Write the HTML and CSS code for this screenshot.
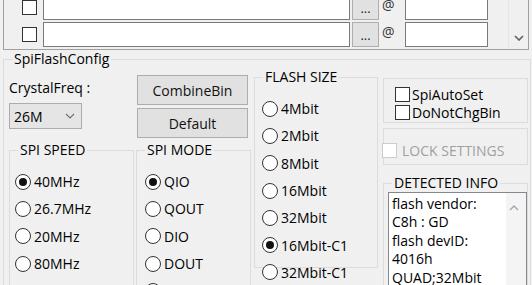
FILE: index.html
```html
<!DOCTYPE html>
<html>
<head>
<meta charset="utf-8">
<link rel="stylesheet" href="styles.css">
</head>
<body>
<div class="files">
  <div class="file-list">
    <div class="file-row">
      <span class="chk-box"></span>
      <span class="path"></span>
      <span class="browse">...</span>
      <span class="at">@</span>
      <span class="addr"></span>
    </div>
    <div class="file-row">
      <span class="chk-box"></span>
      <span class="path"></span>
      <span class="browse">...</span>
      <span class="at">@</span>
      <span class="addr"></span>
    </div>
  </div>
  <div class="vscroll">
    <svg class="chev-down" width="10" height="6" viewBox="0 0 10 6"><polyline points="1,1 5,5 9,1" fill="none" stroke="#606060" stroke-width="1.6"/></svg>
  </div>
</div>

<fieldset class="config">
  <legend>SpiFlashConfig</legend>
  <div class="cols">
    <div class="col col1">
      <div class="label">CrystalFreq :</div>
      <div class="combo"><span>26M</span>
        <svg width="10" height="6" viewBox="0 0 10 6"><polyline points="1,1 5,5 9,1" fill="none" stroke="#707070" stroke-width="1.1"/></svg>
      </div>
      <fieldset class="group speed">
        <legend>SPI SPEED</legend>
        <div class="gbody">
          <div class="radio"><span class="rb on"></span>40MHz</div>
          <div class="radio"><span class="rb"></span>26.7MHz</div>
          <div class="radio"><span class="rb"></span>20MHz</div>
          <div class="radio"><span class="rb"></span>80MHz</div>
        </div>
      </fieldset>
    </div>

    <div class="col col2">
      <div class="btn btn-first">CombineBin</div>
      <div class="btn btn-next">Default</div>
      <fieldset class="group mode">
        <legend>SPI MODE</legend>
        <div class="gbody">
          <div class="radio"><span class="rb on"></span>QIO</div>
          <div class="radio"><span class="rb"></span>QOUT</div>
          <div class="radio"><span class="rb"></span>DIO</div>
          <div class="radio"><span class="rb"></span>DOUT</div>
          <div class="radio"><span class="rb"></span>FASTRD</div>
        </div>
      </fieldset>
    </div>

    <div class="col col3">
      <fieldset class="group size">
        <legend>FLASH SIZE</legend>
        <div class="gbody">
          <div class="radio"><span class="rb"></span>4Mbit</div>
          <div class="radio"><span class="rb"></span>2Mbit</div>
          <div class="radio"><span class="rb"></span>8Mbit</div>
          <div class="radio"><span class="rb"></span>16Mbit</div>
          <div class="radio"><span class="rb"></span>32Mbit</div>
          <div class="radio"><span class="rb on"></span>16Mbit-C1</div>
          <div class="radio"><span class="rb"></span>32Mbit-C1</div>
        </div>
      </fieldset>
    </div>

    <div class="col col4">
      <div class="box options">
        <div class="check"><span class="chk-box"></span>SpiAutoSet</div>
        <div class="check"><span class="chk-box"></span>DoNotChgBin</div>
      </div>
      <div class="box lock">
        <div class="check disabled"><span class="chk-box"></span>LOCK SETTINGS</div>
      </div>
      <fieldset class="group info">
        <legend>DETECTED INFO</legend>
        <div class="info-box">
          <div class="info-text">flash vendor:<br>C8h : GD<br>flash devID:<br>4016h<br>QUAD;32Mbit</div>
          <div class="info-scroll">
            <svg width="10" height="6" viewBox="0 0 10 6"><polyline points="1,5 5,1 9,5" fill="none" stroke="#a6a6a6" stroke-width="1.4"/></svg>
          </div>
        </div>
      </fieldset>
    </div>
  </div>
</fieldset>
</body>
</html>
```

FILE: styles.css
```css
* { box-sizing: border-box; }
html, body { margin: 0; padding: 0; }
body {
  width: 532px;
  height: 285px;
  overflow: hidden;
  background: #f0f0f0;
  font-family: "Open Sans", "Liberation Sans", sans-serif;
  font-size: 14px;
  color: #000;
}

/* top file list panel */
.files {
  display: flex;
  margin: -6px 0 0 3px;
  width: 526px;
  height: 56px;
  border: 1px solid #a0a0a0;
}
.file-list {
  flex: 1;
  display: flex;
  flex-direction: column;
  gap: 2px;
}
.file-row {
  display: flex;
  align-items: center;
  height: 25px;
}
.chk-box {
  flex: none;
  width: 15px;
  height: 15px;
  background: #fff;
  border: 1px solid #333;
}
.file-row .chk-box { margin-left: 18px; }
.path {
  margin-left: 6px;
  width: 307px;
  height: 25px;
  background: #fff;
  border: 1px solid #7a7a7a;
}
.browse {
  margin-left: 2px;
  width: 27px;
  height: 25px;
  background: #e1e1e1;
  border: 1px solid #adadad;
  font-size: 13px;
  line-height: 25px;
  text-align: center;
  color: #222;
}
.at {
  margin-left: 3px;
  width: 15px;
  font-size: 14px;
  line-height: 14px;
  color: #333;
  align-self: flex-start;
  margin-top: 3px;
}
.addr {
  margin-left: 8px;
  width: 83px;
  height: 25px;
  background: #fff;
  border: 1px solid #7a7a7a;
}
.vscroll {
  width: 20px;
  border-left: 1px solid #e6e6e6;
  display: flex;
  justify-content: center;
  align-items: flex-end;
  padding-bottom: 8px;
}

/* config group */
fieldset {
  margin: 0;
  padding: 0;
  min-width: 0;
  border: 1px solid #dcdcdc;
}
legend {
  padding: 0 2px;
  margin-left: 8px;
  line-height: 18px;
  white-space: nowrap;
}
.config {
  margin-left: 3px;
  width: 528px;
  height: 260px;
}
.cols {
  display: flex;
  align-items: flex-start;
}
.col { display: flex; flex-direction: column; }
.col1 { margin-left: 5px; width: 125px; }
.col2 { margin-left: 2px; width: 115px; }
.col3 { margin-left: 3px; width: 124px; }
.col4 { margin-left: 5px; width: 145px; }

.label {
  margin-top: 10px;
  line-height: 19px;
}
.combo {
  margin-top: 6px;
  width: 73px;
  height: 26px;
  background: #e5e5e5;
  border: 1px solid #adadad;
  display: flex;
  align-items: center;
  justify-content: space-between;
  padding: 0 6px 0 4px;
}

.group { height: 200px; }
.speed { margin-top: 12px; }
.mode { margin-top: 3px; }
.gbody { padding-top: 9px; }
.speed .gbody { padding-left: 5px; }
.mode .gbody { padding-left: 8px; }
.size .gbody { padding-left: 7px; }

.btn {
  margin-left: 1px;
  width: 111px;
  height: 30px;
  background: #e1e1e1;
  border: 1px solid #adadad;
  display: flex;
  align-items: center;
  justify-content: center;
  color: #111;
}
.btn-first { margin-top: 7px; }
.btn-next { margin-top: 3px; }

.radio {
  display: flex;
  align-items: center;
  gap: 3px;
  height: 27.3px;
  white-space: nowrap;
}
.rb {
  flex: none;
  width: 16px;
  height: 16px;
  border-radius: 50%;
  border: 1px solid #333;
  background: #fff;
  display: flex;
  align-items: center;
  justify-content: center;
}
.rb.on::after {
  content: "";
  width: 8px;
  height: 8px;
  border-radius: 50%;
  background: #111;
}

/* right column boxes */
.box {
  border: 1px solid #dcdcdc;
}
.options {
  margin-top: 10px;
  height: 45px;
  padding: 6px 0 0 11px;
}
.check {
  display: flex;
  align-items: center;
  gap: 2px;
  height: 18.5px;
  white-space: nowrap;
}
.lock {
  margin-top: 5px;
  height: 37px;
  padding-top: 12px;
}
.check.disabled {
  color: #a0a0a0;
  gap: 5px;
  height: 18px;
}
.check.disabled .chk-box {
  margin-left: -2px;
  border-color: #cccccc;
}
.info {
  margin-top: 9px;
  height: 140px;
}
.info-box {
  margin-left: 4px;
  width: 139px;
  height: 120px;
  background: #fff;
  border: 1px solid #828790;
  display: flex;
}
.info-text {
  flex: 1;
  padding: 2px 0 0 3px;
  line-height: 18.4px;
  white-space: nowrap;
  overflow: hidden;
}
.info-scroll {
  width: 20px;
  background: #f4f4f4;
  padding: 12px 0 0 3px;
}
.info-scroll svg { display: block; }
```
